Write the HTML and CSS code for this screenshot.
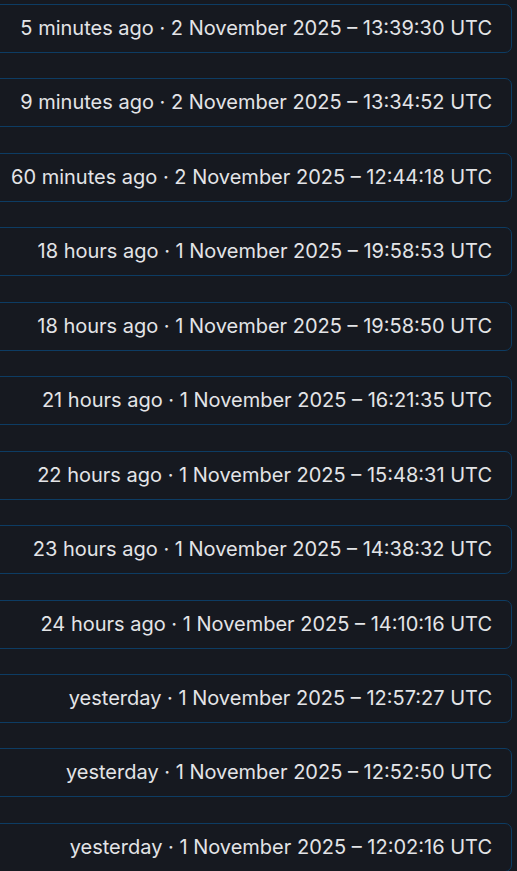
FILE: index.html
```html
<!DOCTYPE html>
<html lang="en">
<head>
<meta charset="utf-8">
<title>History</title>
<link rel="stylesheet" href="styles.css">
</head>
<body>
<ul class="history">
  <li class="entry">5 minutes ago · 2 November 2025 – 13:39:30 UTC</li>
  <li class="entry">9 minutes ago · 2 November 2025 – 13:34:52 UTC</li>
  <li class="entry">60 minutes ago · 2 November 2025 – 12:44:18 UTC</li>
  <li class="entry">18 hours ago · 1 November 2025 – 19:58:53 UTC</li>
  <li class="entry">18 hours ago · 1 November 2025 – 19:58:50 UTC</li>
  <li class="entry">21 hours ago · 1 November 2025 – 16:21:35 UTC</li>
  <li class="entry">22 hours ago · 1 November 2025 – 15:48:31 UTC</li>
  <li class="entry">23 hours ago · 1 November 2025 – 14:38:32 UTC</li>
  <li class="entry">24 hours ago · 1 November 2025 – 14:10:16 UTC</li>
  <li class="entry">yesterday · 1 November 2025 – 12:57:27 UTC</li>
  <li class="entry">yesterday · 1 November 2025 – 12:52:50 UTC</li>
  <li class="entry">yesterday · 1 November 2025 – 12:02:16 UTC</li>
</ul>
</body>
</html>
```

FILE: styles.css
```css
html, body {
  margin: 0;
  padding: 0;
  background: #161920;
  height: 100%;
  overflow: hidden;
}

.history {
  list-style: none;
  margin: 0 5px 0 -40px;
  padding: 4px 0 0 0;
  display: flex;
  flex-direction: column;
  gap: 25.45px;
}

.entry {
  box-sizing: border-box;
  height: 49px;
  display: flex;
  align-items: center;
  justify-content: flex-end;
  padding: 0 19px 1px 0;
  border: 1px solid #0d3c63;
  border-radius: 7px;
  background: #161920;
  color: #e3e4e7;
  font-family: Inter, "Noto Sans", sans-serif;
  font-size: 20px;
  white-space: nowrap;
}
```
